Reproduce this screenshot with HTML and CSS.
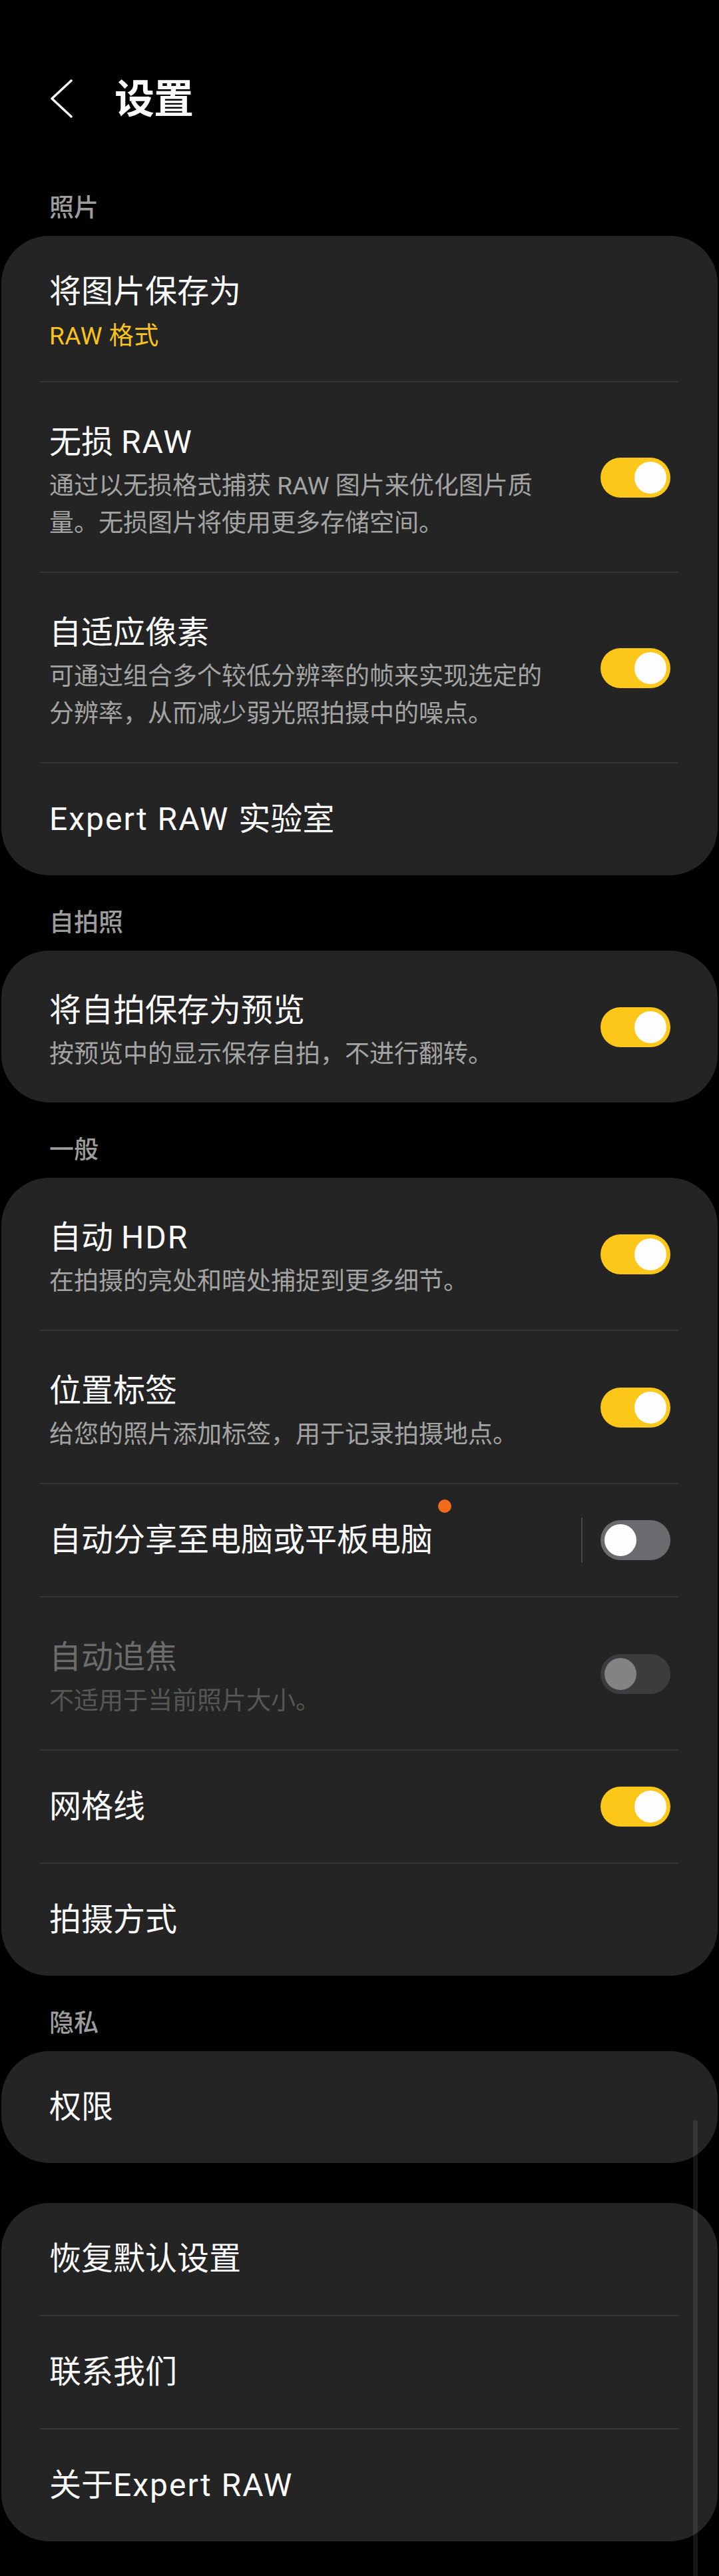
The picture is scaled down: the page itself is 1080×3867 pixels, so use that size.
FILE: index.html
```html
<!DOCTYPE html>
<html lang="zh-CN">
<head>
<meta charset="utf-8">
<title>设置</title>
<link rel="stylesheet" href="styles.css">
</head>
<body>
<div class="screen">
  <header class="topbar">
    <svg class="back" width="34" height="60" viewBox="0 0 34 60"><polyline points="31,3 2,30 31,57" fill="none" stroke="#f5f5f5" stroke-width="3.5" stroke-linecap="round" stroke-linejoin="round"/></svg>
    <h1 class="page-title">设置</h1>
  </header>

  <div class="section-label first">照片</div>
  <section class="card">
    <div class="row has-sub">
      <div class="text"><div class="title">将图片保存为</div><div class="sub">RAW 格式</div></div>
    </div>
    <div class="divider"></div>
    <div class="row has-desc">
      <div class="text"><div class="title">无损 <span class="lat">RAW</span></div><div class="desc">通过以无损格式捕获 RAW 图片来优化图片质<br>量。无损图片将使用更多存储空间。</div></div>
      <div class="toggle on"><span class="thumb"></span></div>
    </div>
    <div class="divider"></div>
    <div class="row has-desc">
      <div class="text"><div class="title">自适应像素</div><div class="desc">可通过组合多个较低分辨率的帧来实现选定的<br>分辨率，从而减少弱光照拍摄中的噪点。</div></div>
      <div class="toggle on"><span class="thumb"></span></div>
    </div>
    <div class="divider"></div>
    <div class="row">
      <div class="text"><div class="title"><span class="lat">Expert RAW </span>实验室</div></div>
    </div>
  </section>

  <div class="section-label">自拍照</div>
  <section class="card">
    <div class="row has-desc">
      <div class="text"><div class="title">将自拍保存为预览</div><div class="desc">按预览中的显示保存自拍，不进行翻转。</div></div>
      <div class="toggle on"><span class="thumb"></span></div>
    </div>
  </section>

  <div class="section-label">一般</div>
  <section class="card">
    <div class="row has-desc">
      <div class="text"><div class="title">自动 <span class="lat">HDR</span></div><div class="desc">在拍摄的亮处和暗处捕捉到更多细节。</div></div>
      <div class="toggle on"><span class="thumb"></span></div>
    </div>
    <div class="divider"></div>
    <div class="row has-desc">
      <div class="text"><div class="title">位置标签</div><div class="desc">给您的照片添加标签，用于记录拍摄地点。</div></div>
      <div class="toggle on"><span class="thumb"></span></div>
    </div>
    <div class="divider"></div>
    <div class="row">
      <div class="text"><div class="title"><span class="badged">自动分享至电脑或平板电脑</span></div></div>
      <div class="vsep"></div>
      <div class="toggle off"><span class="thumb"></span></div>
    </div>
    <div class="divider"></div>
    <div class="row has-desc disabled">
      <div class="text"><div class="title">自动追焦</div><div class="desc">不适用于当前照片大小。</div></div>
      <div class="toggle off dis"><span class="thumb"></span></div>
    </div>
    <div class="divider"></div>
    <div class="row">
      <div class="text"><div class="title">网格线</div></div>
      <div class="toggle on"><span class="thumb"></span></div>
    </div>
    <div class="divider"></div>
    <div class="row">
      <div class="text"><div class="title">拍摄方式</div></div>
    </div>
  </section>

  <div class="section-label">隐私</div>
  <section class="card">
    <div class="row">
      <div class="text"><div class="title">权限</div></div>
    </div>
  </section>

  <section class="card gap">
    <div class="row">
      <div class="text"><div class="title">恢复默认设置</div></div>
    </div>
    <div class="divider"></div>
    <div class="row">
      <div class="text"><div class="title">联系我们</div></div>
    </div>
    <div class="divider"></div>
    <div class="row">
      <div class="text"><div class="title">关于<span class="lat">Expert RAW</span></div></div>
    </div>
  </section>

  <div class="scrollbar"></div>
</div>
</body>
</html>
```

FILE: styles.css
```css
html, body {
  margin: 0;
  padding: 0;
  background: #000;
}

body {
  font-family: Roboto, "Noto Sans CJK SC", "Noto Sans", sans-serif;
  color: #fafafa;
}

.screen {
  position: relative;
  width: 1080px;
  min-height: 3867px;
  padding-bottom: 60px;
  box-sizing: border-box;
}

.topbar {
  display: flex;
  align-items: center;
  height: 100px;
  margin-top: 100px;
  padding-left: 76px;
}

.back {
  display: block;
  flex: none;
  margin-top: -4px;
}

.page-title {
  margin: 0 0 0 62px;
  font-size: 60px;
  font-weight: 700;
  line-height: 100px;
  color: #fafafa;
  letter-spacing: -1px;
}

.section-label {
  margin: 47px 0 16px;
  padding-left: 74px;
  font-size: 37px;
  line-height: 50px;
  font-weight: 500;
  color: #9c9c9c;
}

.section-label.first {
  margin-top: 88px;
}

.card {
  margin: 0 2px;
  background: #242424;
  border-radius: 72px;
  overflow: hidden;
}

.card.gap {
  margin-top: 60px;
}

.row {
  display: flex;
  align-items: center;
  padding: 46px 71px 46px 72px;
}

.row.has-desc,
.row.has-sub {
  padding-bottom: 44px;
}

.text {
  flex: 1;
  min-width: 0;
  padding-right: 40px;
}

.title {
  font-size: 48px;
  line-height: 76px;
  color: #fafafa;
}

.title .lat {
  letter-spacing: 2px;
}

.has-desc .title {
  margin-top: 6px;
}

.desc {
  font-size: 37px;
  line-height: 56px;
  color: #a4a4a4;
}

.sub {
  margin-top: 5px;
  font-size: 37px;
  line-height: 47px;
  color: #f9c31c;
  letter-spacing: 0.5px;
}

.disabled .title {
  color: #6c6c6c;
}

.disabled .desc {
  color: #565656;
}

.divider {
  height: 2px;
  margin: 0 59px 0 58px;
  background: #353535;
}

.badged {
  position: relative;
  display: inline-block;
}

.badged::after {
  content: "";
  position: absolute;
  left: calc(100% + 8px);
  top: -23px;
  width: 20px;
  height: 20px;
  border-radius: 50%;
  background: #f26a1b;
}

.vsep {
  flex: none;
  width: 2px;
  height: 68px;
  margin-right: 27px;
  background: #474747;
}

.toggle {
  flex: none;
  display: flex;
  align-items: center;
  box-sizing: border-box;
  width: 105px;
  height: 60px;
  padding: 0 6px;
  border-radius: 30px;
}

.toggle .thumb {
  display: block;
  width: 48px;
  height: 48px;
  border-radius: 50%;
  background: #fdfdfd;
}

.toggle.on {
  justify-content: flex-end;
  background: #fcc718;
}

.toggle.off {
  justify-content: flex-start;
  background: #6b6a6f;
}

.toggle.dis {
  background: #3c3c3e;
}

.toggle.dis .thumb {
  background: #838383;
}

.scrollbar {
  position: absolute;
  left: 1041px;
  top: 3083px;
  width: 7px;
  height: 753px;
  border-radius: 4px;
  background: rgba(255, 255, 255, 0.09);
}
```
